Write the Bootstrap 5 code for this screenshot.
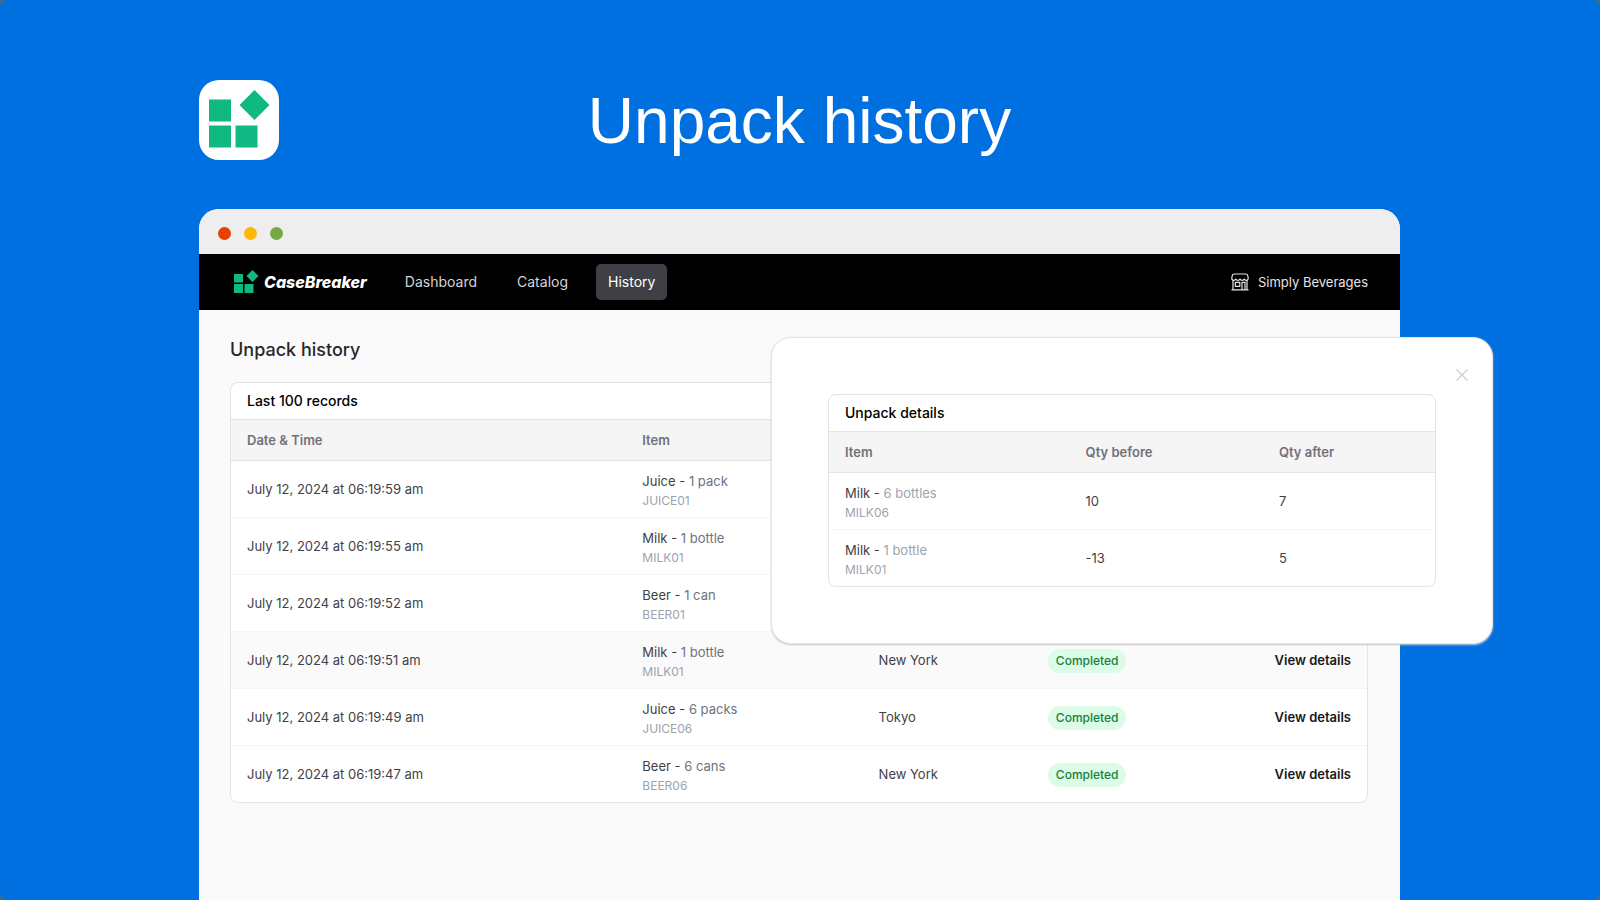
<!DOCTYPE html>
<html lang="en">
<head>
<meta charset="utf-8">
<meta name="viewport" content="width=device-width, initial-scale=1">
<title>Unpack history</title>
<link href="https://cdn.jsdelivr.net/npm/bootstrap@5.3.0/dist/css/bootstrap.min.css" rel="stylesheet">
<style>
  html { background: #3c6c85; }
  body { background: transparent; font-family: Inter, "Liberation Sans", sans-serif; font-size: 13px; line-height: 20px; color: #3f3f46; }
  .stage { background: #0070e0; border-radius: 8px; padding-top: 80px; }
  .column { width: calc(75% + 1px); margin-left: calc(12.5% - 1px); }
  .hero { display: grid; grid-template-columns: 1fr auto 1fr; margin-bottom: 47px; }
  .app-logo { width: 80px; height: 80px; border-radius: 20px; background: #fff; }
  .hero-title { font-family: "Liberation Sans", Arial, sans-serif; font-size: 64px; line-height: 82px; font-weight: 400; color: #fff; }
  .browser { background: #fafafa; border-radius: 20px 20px 0 0; }
  .chrome { height: 45px; padding: 4px 19px 0; gap: 13px; background: #eee; border-radius: 20px 20px 0 0; }
  .dot { width: 13px; height: 13px; }
  .topnav { height: 56px; padding: 0 32px 0 35px; background: #000; }
  .brand { font-size: 16px; font-weight: 800; font-style: italic; color: #fff; gap: 5px; margin-right: 26px; }
  .topnav .nav { gap: 16px; }
  .topnav .nav-link { padding: 8px 12px; font-size: 14px; color: #d4d4d8; border-radius: 5px; }
  .topnav .nav-link.active { background: #3f3f46; color: #fff; }
  .shop { color: #e4e4e7; gap: 9px; }
  .content { padding: 28px 32px 0 31px; }
  .page-title { font-size: 18px; line-height: 24px; font-weight: 500; color: #27272a; margin-bottom: 20px; }
  .panel { border: 1px solid #e4e4e7; border-radius: 8px; overflow: hidden; background: #fff; }
  .panel-title { font-size: 14px; line-height: 20px; padding: 8px 16px; margin: 0; font-weight: 500; color: #000; border-bottom: 1px solid #e4e4e7; }
  .records { table-layout: fixed; border-collapse: separate; border-spacing: 0; margin: 0; color: #3f3f46; --bs-table-bg: transparent; }
  .records > thead th { height: 41px; padding: 0 16px; vertical-align: middle; font-weight: 600; color: #71717a; background: #f5f5f5; border-bottom: 1px solid #e4e4e7; }
  .records > tbody td { height: 57px; padding: 1px 16px 0; line-height: 19px; vertical-align: middle; border-bottom: 1px solid #f4f4f5; }
  .records > tbody > tr:last-child > td { height: 56px; border-bottom: 0; }
  .records > tbody td.item { padding-top: 3px; }
  .records .current { background: #fafafa; }
  .unit { color: #6b7280; }
  .sku { font-size: 12px; color: #9ca3af; }
  .details .unit { color: #9ca3af; }
  .state { font-size: 12px; line-height: 16px; font-weight: 500; padding: 4px 8px; color: #15803d; background: #dcfce7; }
  .view { font-weight: 600; color: #18181b; }
  .details { position: absolute; top: 128px; left: 572px; right: -93px; padding: 56px; background: #fff; border: 1px solid #e4e4e7; border-radius: 20px; box-shadow: 0 1px 2px #c8c8cc; }
  .dismiss { position: absolute; top: 25px; right: 18px; width: 24px; height: 24px; padding: 6px; line-height: 0; color: #ccc; }
</style>
</head>
<body>
<div class="stage min-vh-100 d-flex flex-column overflow-hidden">
  <header class="hero column">
    <svg class="app-logo" viewBox="0 0 80 80" fill="#10b981" aria-hidden="true">
      <path d="M10 19.500h22v22H10zM10 45.500h22v22H10zM36.500 45.500h22v22h-22zM55.500 10l15 15-15 15-15-15z"/>
    </svg>
    <h1 class="hero-title m-0">Unpack history</h1>
  </header>

  <div class="browser column flex-grow-1 position-relative">
    <div class="chrome d-flex align-items-center" aria-hidden="true">
      <span class="dot rounded-circle" style="background:#eb3f00"></span>
      <span class="dot rounded-circle" style="background:#ffb700"></span>
      <span class="dot rounded-circle" style="background:#76a843"></span>
    </div>

    <nav class="topnav d-flex align-items-center">
      <a class="brand d-flex align-items-center text-decoration-none" href="#">
        <svg width="25" height="24" viewBox="0 0 25 24" fill="#10b981" aria-hidden="true">
          <path d="M0 4h9v8.500H0zM0 14h9v9H0zM10.500 14h9v9h-9zM18.500 0l6 6-6 6-6-6z"/>
        </svg>
        CaseBreaker
      </a>
      <div class="nav">
        <a class="nav-link" href="#">Dashboard</a>
        <a class="nav-link" href="#">Catalog</a>
        <a class="nav-link active" href="#" aria-current="page">History</a>
      </div>
      <a class="shop d-flex align-items-center text-decoration-none ms-auto" href="#">
        <svg width="18" height="18" viewBox="0 0 18 18" fill="none" stroke="currentColor" stroke-width="1.200" stroke-linejoin="round" aria-hidden="true">
          <path d="M3 1h12q1.500 0 1.700 1.500l.6 3q-.3 1.800-2 1.800T13.200 6Q12.600 7.300 11.100 7.300T9 6Q8.400 7.300 6.900 7.300T4.800 6Q4.300 7.300 2.700 7.300T.7 5.500l.6-3Q1.500 1 3 1zM2 7.500V16.800M16 7.500V16.800M.5 16.900h17M4.300 9.300h4.500v4H4.300zM11 16.800V9.300h3v7.500"/>
        </svg>
        Simply Beverages
      </a>
    </nav>

    <main class="content">
      <h2 class="page-title">Unpack history</h2>
      <section class="panel">
        <h3 class="panel-title">Last 100 records</h3>
        <table class="table records">
          <colgroup><col style="width:34.800%"><col style="width:20.800%"><col style="width:14.900%"><col style="width:14.750%"><col></colgroup>
          <thead>
            <tr><th scope="col">Date &amp; Time</th><th scope="col">Item</th><th></th><th></th><th></th></tr>
          </thead>
          <tbody>
            <tr><td>July 12, 2024 at 06:19:59 am</td><td class="item">Juice - <span class="unit">1 pack</span><div class="sku">JUICE01</div></td><td></td><td></td><td></td></tr>
            <tr><td>July 12, 2024 at 06:19:55 am</td><td class="item">Milk - <span class="unit">1 bottle</span><div class="sku">MILK01</div></td><td></td><td></td><td></td></tr>
            <tr><td>July 12, 2024 at 06:19:52 am</td><td class="item">Beer - <span class="unit">1 can</span><div class="sku">BEER01</div></td><td></td><td></td><td></td></tr>
            <tr class="current"><td>July 12, 2024 at 06:19:51 am</td><td class="item">Milk - <span class="unit">1 bottle</span><div class="sku">MILK01</div></td><td>New York</td><td><span class="state d-inline-block rounded-pill">Completed</span></td><td class="text-end"><a class="view text-decoration-none" href="#">View details</a></td></tr>
            <tr><td>July 12, 2024 at 06:19:49 am</td><td class="item">Juice - <span class="unit">6 packs</span><div class="sku">JUICE06</div></td><td>Tokyo</td><td><span class="state d-inline-block rounded-pill">Completed</span></td><td class="text-end"><a class="view text-decoration-none" href="#">View details</a></td></tr>
            <tr><td>July 12, 2024 at 06:19:47 am</td><td class="item">Beer - <span class="unit">6 cans</span><div class="sku">BEER06</div></td><td>New York</td><td><span class="state d-inline-block rounded-pill">Completed</span></td><td class="text-end"><a class="view text-decoration-none" href="#">View details</a></td></tr>
          </tbody>
        </table>
      </section>
    </main>

    <div class="details" role="dialog" aria-labelledby="details-title">
      <button class="dismiss btn border-0" type="button" aria-label="Close">
        <svg width="12" height="12" viewBox="0 0 12 12" stroke="currentColor" stroke-width="1.200" aria-hidden="true"><path d="M.5.5l11 11M11.500.5l-11 11"/></svg>
      </button>
      <section class="panel">
        <h3 class="panel-title" id="details-title">Unpack details</h3>
        <table class="table records">
          <colgroup><col style="width:39.700%"><col style="width:31.900%"><col></colgroup>
          <thead><tr><th scope="col">Item</th><th scope="col">Qty before</th><th scope="col">Qty after</th></tr></thead>
          <tbody>
            <tr><td class="item">Milk - <span class="unit">6 bottles</span><div class="sku">MILK06</div></td><td>10</td><td>7</td></tr>
            <tr><td class="item">Milk - <span class="unit">1 bottle</span><div class="sku">MILK01</div></td><td>-13</td><td>5</td></tr>
          </tbody>
        </table>
      </section>
    </div>
  </div>
</div>
<script src="https://cdn.jsdelivr.net/npm/bootstrap@5.3.0/dist/js/bootstrap.bundle.min.js"></script>
</body>
</html>
